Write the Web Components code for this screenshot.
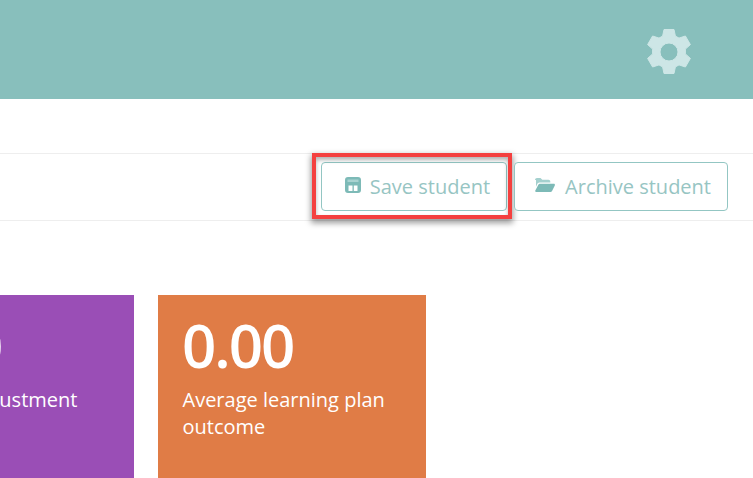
<!DOCTYPE html>
<html>
<head>
<meta charset="utf-8">
<title>Student</title>
<style>
  html, body { margin: 0; padding: 0; background: #fff; overflow: hidden; }
  body { width: 753px; height: 478px; font-family: "Open Sans", sans-serif; }
</style>
</head>
<body>
<app-header></app-header>
<app-toolbar>
  <tool-button icon="save" pad="23" gap="9" highlight>Save student</tool-button>
  <tool-button icon="folder" pad="20" gap="10">Archive student</tool-button>
</app-toolbar>
<stat-row>
  <stat-card value="0.00" color="#9a4eb6">Average adjustment</stat-card>
  <stat-card value="0.00" color="#e07c46">Average learning plan outcome</stat-card>
</stat-row>

<script>
class AppHeader extends HTMLElement {
  constructor() {
    super();
    this.attachShadow({ mode: 'open' });
    this.shadowRoot.innerHTML = `
      <style>
        :host {
          display: flex;
          justify-content: flex-end;
          align-items: center;
          box-sizing: border-box;
          height: 99px;
          padding: 4px 60px 0 0;
          background: #88bfbc;
        }
        svg { width: 48px; height: 48px; display: block; }
      </style>
      <svg viewBox="0 0 48 48" aria-label="Settings">
        <path fill="#cde6e6" stroke="#cde6e6" stroke-width="1" stroke-linejoin="round" fill-rule="evenodd" d="M19 1.500h10l1.400 6.600 3.600 2 6.400-2.100 5 8.600-5 4.500v4.800l5 4.500-5 8.600-6.400-2.100-3.600 2-1.400 6.600H19l-1.400-6.600-3.600-2-6.400 2.100-5-8.600 5-4.500v-4.800l-5-4.500 5-8.600 6.400 2.100 3.600-2zM24 15a9 9 0 1 0 0 18 9 9 0 0 0 0-18z"/>
      </svg>
    `;
  }
}
customElements.define('app-header', AppHeader);

class AppToolbar extends HTMLElement {
  constructor() {
    super();
    this.attachShadow({ mode: 'open' });
    this.shadowRoot.innerHTML = `
      <style>
        :host {
          display: flex;
          justify-content: flex-end;
          align-items: flex-start;
          gap: 7px;
          box-sizing: border-box;
          height: 68px;
          margin-top: 54px;
          padding: 8px 25px 0 0;
          border-top: 1px solid #eeeeee;
          border-bottom: 1px solid #eeeeee;
        }
      </style>
      <slot></slot>
    `;
  }
}
customElements.define('app-toolbar', AppToolbar);

const ICONS = {
  save: `<svg viewBox="0 0 16 16" width="16" height="16"><path fill="#7dbab7" fill-rule="evenodd" d="M3 0h10a3 3 0 0 1 3 3v10a3 3 0 0 1-3 3H3a3 3 0 0 1-3-3V3a3 3 0 0 1 3-3zM3.500 8.500V14h4V8.500zM8.800 8.500V14h3.700V8.500z"/><rect x="2.500" y="2.500" width="11" height="2.500" fill="#a9d3d1"/></svg>`,
  folder: `<svg viewBox="0 0 20 14" width="20" height="14"><path fill="#a4d0ce" d="M0 2C0 .9.900 0 2 0h3.500l1.800 1.800h6.200c1 0 1.800.8 1.800 1.800v.9H4.800C3.700 4.500 2.800 5 2.300 6L1 8.700V2z"/><path fill="#7dbab7" d="M5 5.800h13.800c.9 0 1.400.8 1 1.600l-2.600 5.400c-.4.800-1 1.200-1.800 1.200H1c-.7 0-1.100-.7-.8-1.300l3-5.700c.4-.8 1-1.200 1.800-1.200z"/></svg>`
};

class ToolButton extends HTMLElement {
  constructor() {
    super();
    this.attachShadow({ mode: 'open' });
  }
  connectedCallback() {
    const mark = this.hasAttribute('highlight') ? '<span class="mark"></span>' : '';
    this.shadowRoot.innerHTML = `
      <style>
        :host {
          display: inline-flex;
          position: relative;
          font-family: "Open Sans", sans-serif;
        }
        button {
          display: flex;
          align-items: center;
          gap: ${this.getAttribute('gap')}px;
          box-sizing: border-box;
          height: 49px;
          padding: 0 16px 0 ${this.getAttribute('pad')}px;
          background: #fff;
          border: 1px solid #93c6c3;
          border-radius: 4px;
          color: #97c5c3;
          font: 400 20px "Open Sans", sans-serif;
        }
        svg { display: block; margin-top: -3px; }
        .mark {
          position: absolute;
          left: -9px;
          top: -9px;
          right: -5px;
          bottom: -8px;
          border: 4px solid #f4403f;
          box-shadow: 0 3px 6px 1px rgba(0, 0, 0, 0.4), inset 0 3px 4px rgba(0, 0, 0, 0.3);
        }
      </style>
      <button>${ICONS[this.getAttribute('icon')]}<slot></slot></button>
      ${mark}
    `;
  }
}
customElements.define('tool-button', ToolButton);

class StatRow extends HTMLElement {
  constructor() {
    super();
    this.attachShadow({ mode: 'open' });
    this.shadowRoot.innerHTML = `
      <style>
        :host {
          display: flex;
          gap: 24px;
          margin: 74px 0 0 -134px;
        }
      </style>
      <slot></slot>
    `;
  }
}
customElements.define('stat-row', StatRow);

class StatCard extends HTMLElement {
  constructor() {
    super();
    this.attachShadow({ mode: 'open' });
  }
  connectedCallback() {
    this.shadowRoot.innerHTML = `
      <style>
        :host {
          display: block;
          box-sizing: border-box;
          flex: 0 0 268px;
          height: 190px;
          padding: 14px 24px;
          background: ${this.getAttribute('color')};
          color: #fff;
          font-family: "Open Sans", sans-serif;
        }
        .value { font-size: 60px; font-weight: 600; line-height: 72px; letter-spacing: -2px; }
        .label { margin: 5px 0 0 0.5px; font-size: 20px; line-height: 27px; }
      </style>
      <div class="value">${this.getAttribute('value')}</div>
      <div class="label"><slot></slot></div>
    `;
  }
}
customElements.define('stat-card', StatCard);
</script>
</body>
</html>
